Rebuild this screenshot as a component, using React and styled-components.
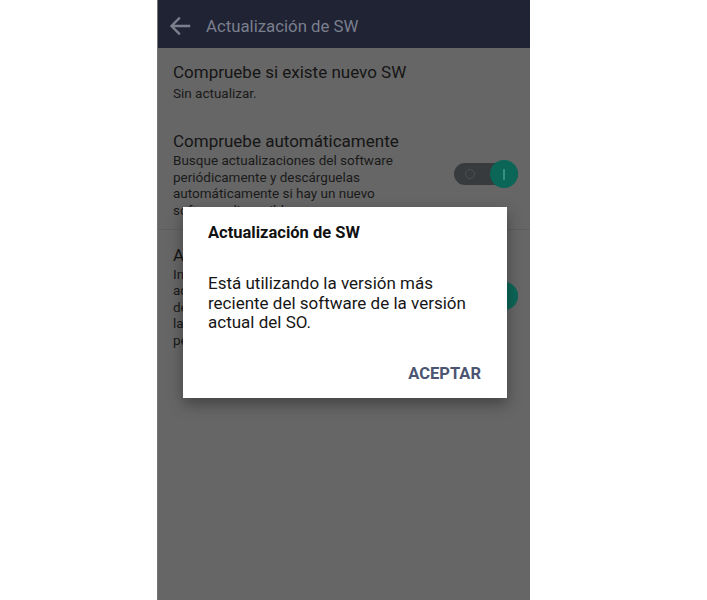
import React from "react";
import styled, { createGlobalStyle } from "styled-components";

const Global = createGlobalStyle`
  html, body {
    margin: 0;
    padding: 0;
    background: #ffffff;
    font-family: Roboto, "Liberation Sans", sans-serif;
  }
`;

const Page = styled.div`
  width: 707px;
  height: 600px;
  padding-left: 157px;
  box-sizing: border-box;
  background: #ffffff;
`;

const Phone = styled.div`
  position: relative;
  width: 373px;
  height: 600px;
  background: #666666;
  overflow: hidden;
  border-left: 1px solid #757575;
  box-sizing: border-box;
`;

const Header = styled.header`
  height: 48px;
  background: #1f2334;
  display: flex;
  align-items: center;
  padding: 3px 0 0 10px;
  box-sizing: border-box;
  gap: 14px;
`;

const HeaderTitle = styled.h1`
  margin: 0;
  font-size: 16.8px;
  font-weight: 400;
  color: #7b7f8c;
`;

const Item = styled.div`
  display: flex;
  align-items: center;
  padding: ${(p) => p.$pad || "12px 12px 12px 15px"};
  border-bottom: ${(p) => (p.$divider ? "1px solid #5e5e5e" : "none")};
`;

const ItemText = styled.div`
  flex: 1;
`;

const ItemTitle = styled.div`
  font-size: 17px;
  line-height: 22px;
  color: #151515;
`;

const ItemSub = styled.div`
  margin-top: ${(p) => p.$mt || "0px"};
  font-size: 13.5px;
  line-height: 16.4px;
  color: #1a1a1a;
`;

const Toggle = styled.div`
  position: relative;
  width: 64px;
  height: 22px;
  border-radius: 11px;
  background: #383b3d;
  flex-shrink: 0;
`;

const Off = styled.div`
  position: absolute;
  left: 11px;
  top: 6px;
  width: 8px;
  height: 8px;
  border-radius: 50%;
  border: 1.5px solid #4d5052;
`;

const Knob = styled.div`
  position: absolute;
  right: 0;
  top: -3px;
  width: 28px;
  height: 28px;
  border-radius: 50%;
  background: #0c6658;
  display: flex;
  align-items: center;
  justify-content: center;
  &::after {
    content: "";
    width: 2px;
    height: 11px;
    background: #3a8f83;
  }
`;

const Dialog = styled.div`
  position: absolute;
  left: 25px;
  top: 207px;
  width: 324px;
  height: 191px;
  box-sizing: border-box;
  background: #ffffff;
  padding: 16px 25px 0 25px;
  box-shadow: 0 6px 14px rgba(0, 0, 0, 0.35);
  display: flex;
  flex-direction: column;
`;

const DialogTitle = styled.div`
  font-size: 16.5px;
  font-weight: 700;
  line-height: 20px;
  color: #111111;
`;

const DialogBody = styled.div`
  margin-top: 31px;
  font-size: 17px;
  line-height: 19.5px;
  color: #161616;
`;

const Actions = styled.div`
  display: flex;
  justify-content: flex-end;
  margin-top: 31px;
`;

const Button = styled.button`
  border: none;
  background: none;
  padding: 0;
  margin-right: 1px;
  font-family: inherit;
  font-size: 16.5px;
  font-weight: 700;
  color: #4b5571;
`;

const Back = () => (
  <svg width="24" height="24" viewBox="0 0 24 24">
    <path
      d="M21 12H4M11 4.5L3.5 12 11 19.5"
      fill="none"
      stroke="#7b7f8c"
      strokeWidth="2.4"
      strokeLinecap="square"
    />
  </svg>
);

export default function App() {
  return (
    <>
      <Global />
      <Page>
        <Phone>
          <Header>
            <Back />
            <HeaderTitle>Actualización de SW</HeaderTitle>
          </Header>

          <Item $pad="13px 12px 20px 15px">
            <ItemText>
              <ItemTitle>Compruebe si existe nuevo SW</ItemTitle>
              <ItemSub $mt="2px">Sin actualizar.</ItemSub>
            </ItemText>
          </Item>

          <Item $pad="9px 12px 11px 15px" $divider>
            <ItemText>
              <ItemTitle>Compruebe automáticamente</ItemTitle>
              <ItemSub>
                Busque actualizaciones del software
                <br />
                periódicamente y descárguelas
                <br />
                automáticamente si hay un nuevo
                <br />
                software disponible.
              </ItemSub>
            </ItemText>
            <Toggle>
              <Off />
              <Knob />
            </Toggle>
          </Item>

          <Item $pad="14px 12px 12px 15px">
            <ItemText>
              <ItemTitle>Actualizar por la noche</ItemTitle>
              <ItemSub>
                Instale automáticamente las
                <br />
                actualizaciones descargadas
                <br />
                de 2:00 a 5:00 de la mañana si
                <br />
                la batería es suficiente o el teléfono
                <br />
                permanece cargando.
              </ItemSub>
            </ItemText>
            <Toggle>
              <Off />
              <Knob />
            </Toggle>
          </Item>

          <Dialog>
            <DialogTitle>Actualización de SW</DialogTitle>
            <DialogBody>
              Está utilizando la versión más reciente del software de la versión actual del SO.
            </DialogBody>
            <Actions>
              <Button>ACEPTAR</Button>
            </Actions>
          </Dialog>
        </Phone>
      </Page>
    </>
  );
}
